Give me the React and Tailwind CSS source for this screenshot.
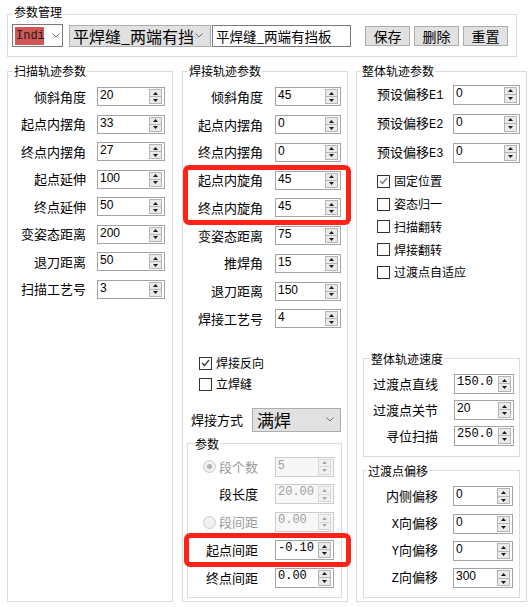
import React from 'react';

function Tri({ up, color }) {
  return (
    <svg width="5" height="3" viewBox="0 0 5 3" className="block">
      <path d={up ? 'M0 3h5L2.5 0z' : 'M0 0h5L2.5 3z'} fill={color} />
    </svg>
  );
}

function Chevron() {
  return (
    <svg width="8" height="5" viewBox="0 0 8 5" className="block">
      <path d="M0.5 0.5L4 4L7.5 0.5" fill="none" stroke="#707070" strokeWidth="1" />
    </svg>
  );
}

// Windows-style spin edit
function Spin({ value, w = 'w-[67px]', h = 'h-[19px]', disabled = false, mono = false }) {
  const box = disabled
    ? 'border-[#cccccc] bg-[#f7f7f7] text-[#a0a0a0]'
    : 'border-[#a3a3a3] bg-white text-black';
  const btn = disabled ? 'border-[#d8d8d8] bg-[#f2f2f2]' : 'border-[#b5b5b5] bg-[#eaeaea]';
  const arrow = disabled ? '#a8a8a8' : '#1a1a1a';
  return (
    <div className={`flex shrink-0 border ${w} ${h} ${box}`}>
      <span
        className={`flex-1 overflow-hidden whitespace-nowrap pl-[2px] text-[12px] leading-[15px] ${
          mono ? "font-['Liberation_Mono',monospace]" : "font-['Liberation_Sans',sans-serif]"
        }`}
      >
        {value}
      </span>
      <div className="my-[1px] mr-[2px] flex w-[13px] flex-col">
        <div className={`flex flex-1 items-center justify-center border ${btn}`}>
          <Tri up color={arrow} />
        </div>
        <div className={`-mt-px flex flex-1 items-center justify-center border ${btn}`}>
          <Tri color={arrow} />
        </div>
      </div>
    </div>
  );
}

function Check({ checked, label, dim }) {
  return (
    <div className="flex items-center gap-[4px]">
      <span className="flex h-[13px] w-[13px] items-center justify-center border border-[#333333] bg-white">
        {checked && (
          <svg width="9" height="8" viewBox="0 0 9 8">
            <path d="M1 4l2.5 2.5L8 1" fill="none" stroke={dim ? '#777777' : '#333333'} strokeWidth="1.2" />
          </svg>
        )}
      </span>
      <span className="text-[12px] leading-[16px]">{label}</span>
    </div>
  );
}

function Radio({ checked }) {
  return (
    <span className="flex h-[13px] w-[13px] shrink-0 items-center justify-center rounded-full border border-[#cccccc] bg-[#f0f0f0]">
      {checked && <span className="h-[5px] w-[5px] rounded-full bg-[#b0b0b0]" />}
    </span>
  );
}

function Mono({ children }) {
  return <span className="font-['Liberation_Mono',monospace] text-[12px]">{children}</span>;
}

const scanRows = [
  ['倾斜角度', '20'],
  ['起点内摆角', '33'],
  ['终点内摆角', '27'],
  ['起点延伸', '100'],
  ['终点延伸', '50'],
  ['变姿态距离', '200'],
  ['退刀距离', '50'],
  ['扫描工艺号', '3'],
];

const weldRows = [
  ['倾斜角度', '45'],
  ['起点内摆角', '0'],
  ['终点内摆角', '0'],
  ['起点内旋角', '45'],
  ['终点内旋角', '45'],
  ['变姿态距离', '75'],
  ['推焊角', '15'],
  ['退刀距离', '150'],
  ['焊接工艺号', '4'],
];

export default function App() {
  return (
    <div className="relative h-[607px] w-[532px] overflow-hidden bg-white pt-[4px] font-['Noto_Sans_CJK_SC',sans-serif] text-black">
      {/* 参数管理 */}
      <fieldset className="ml-[7px] w-[510px] border border-[#dcdcdc] pb-[9px]">
        <legend className="ml-[5px] px-[1px] pb-[4px] text-[12px] leading-[16px]">参数管理</legend>
        <div className="flex h-[23px] items-center pl-[4px]">
          <div className="flex h-[23px] w-[51px] items-center border border-[#7a7a7a] bg-white pl-[2px]">
            <span className="h-[18px] w-[29px] bg-[#d25858] pl-[1px] font-['Liberation_Mono',monospace] text-[12px] leading-[18px] text-[#1a1a1a]">
              Indi
            </span>
            <span className="ml-[8px]">
              <Chevron />
            </span>
          </div>
          <div className="ml-[6px] flex h-[22px] w-[142px] items-center border border-[#adadad] bg-[#e1e1e1] pl-[3px]">
            <span className="w-[121px] overflow-hidden whitespace-nowrap text-[16px] leading-[20px]">平焊缝_两端有挡板</span>
            <span className="ml-[1px]">
              <Chevron />
            </span>
          </div>
          <div className="ml-[1px] flex h-[22px] w-[139px] items-center overflow-hidden whitespace-nowrap border border-[#7a7a7a] bg-white pl-[3px] text-[13.5px] leading-[20px]">
            平焊缝_两端有挡板
          </div>
          <div className="ml-[14px] flex gap-[4px]">
            {['保存', '删除', '重置'].map((t) => (
              <button
                key={t}
                type="button"
                className="flex h-[20px] w-[45px] items-center justify-center border border-[#adadad] bg-[#e1e1e1] text-[14px] leading-[18px]"
              >
                {t}
              </button>
            ))}
          </div>
        </div>
      </fieldset>

      <div className="mt-[6px] flex">
        {/* 扫描轨迹参数 */}
        <fieldset className="ml-[7px] h-[539px] w-[166px] border border-[#dcdcdc]">
          <legend className="ml-[5px] px-[1px] text-[12px] leading-[16px]">扫描轨迹参数</legend>
          <div className="flex flex-col pt-[4px]">
            {scanRows.map(([label, v]) => (
              <div key={label} className="flex h-[27.5px] items-center">
                <span className="w-[78px] text-right text-[13px] leading-[18px]">{label}</span>
                <span className="ml-[11px]">
                  <Spin value={v} w="w-[68px]" />
                </span>
              </div>
            ))}
          </div>
        </fieldset>

        {/* 焊接轨迹参数 */}
        <fieldset className="ml-[9px] h-[539px] w-[166px] border border-[#dcdcdc]">
          <legend className="ml-[5px] px-[1px] text-[12px] leading-[16px]">焊接轨迹参数</legend>
          <div className="flex flex-col pt-[4px]">
            {weldRows.map(([label, v]) => (
              <div key={label} className="flex h-[27.75px] items-center">
                <span className="w-[80px] text-right text-[13px] leading-[18px]">{label}</span>
                <span className="ml-[12px]">
                  <Spin value={v} w="w-[66px]" />
                </span>
              </div>
            ))}
          </div>
          <div className="mt-[20px] flex flex-col pl-[16px]">
            <div className="flex h-[21px] items-center">
              <Check checked label="焊接反向" />
            </div>
            <div className="flex h-[21px] items-center">
              <Check label="立焊缝" />
            </div>
          </div>
          <div className="mt-[13px] flex h-[24px] items-center pl-[8px]">
            <span className="w-[52px] text-[13px] leading-[18px]">焊接方式</span>
            <div className="ml-[9px] flex h-[24px] w-[89px] items-center justify-between border border-[#adadad] bg-[#e1e1e1] pl-[4px] pr-[6px]">
              <span className="text-[17px] leading-[22px]">满焊</span>
              <Chevron />
            </div>
          </div>

          {/* 参数 */}
          <fieldset className="ml-[4px] mt-[4px] w-[155px] border border-[#dcdcdc] pb-[5px]">
            <legend className="ml-[6px] px-[1px] text-[12px] leading-[16px]">参数</legend>
            <div className="flex flex-col pt-[1px]">
              <div className="flex h-[27.75px] items-center">
                <div className="flex w-[70px] items-center justify-end gap-[3px]">
                  <Radio checked />
                  <span className="text-[13px] leading-[18px] text-[#9a9a9a]">段个数</span>
                </div>
                <span className="ml-[17px]">
                  <Spin value="5" w="w-[59px]" h="h-[20px]" disabled />
                </span>
              </div>
              <div className="flex h-[27.75px] items-center">
                <span className="w-[70px] text-right text-[13px] leading-[18px]">段长度</span>
                <span className="ml-[17px]">
                  <Spin value="20.00" w="w-[59px]" h="h-[20px]" disabled mono />
                </span>
              </div>
              <div className="flex h-[27.75px] items-center">
                <div className="flex w-[70px] items-center justify-end gap-[3px]">
                  <Radio />
                  <span className="text-[13px] leading-[18px] text-[#9a9a9a]">段间距</span>
                </div>
                <span className="ml-[17px]">
                  <Spin value="0.00" w="w-[59px]" h="h-[20px]" disabled mono />
                </span>
              </div>
              <div className="flex h-[27.75px] items-center">
                <span className="w-[70px] text-right text-[13px] leading-[18px]">起点间距</span>
                <span className="ml-[17px]">
                  <Spin value="-0.10" w="w-[59px]" h="h-[20px]" mono />
                </span>
              </div>
              <div className="flex h-[27.75px] items-center">
                <span className="w-[70px] text-right text-[13px] leading-[18px]">终点间距</span>
                <span className="ml-[17px]">
                  <Spin value="0.00" w="w-[59px]" h="h-[20px]" mono />
                </span>
              </div>
            </div>
          </fieldset>
        </fieldset>

        {/* 整体轨迹参数 */}
        <fieldset className="ml-[8px] h-[539px] w-[171px] border border-[#dcdcdc]">
          <legend className="ml-[4px] px-[1px] text-[12px] leading-[16px]">整体轨迹参数</legend>
          <div className="flex flex-col pl-[20px] pt-[1px]">
            {['E1', 'E2', 'E3'].map((e) => (
              <div key={e} className="flex h-[29px] items-center">
                <span className="w-[76px] text-[13px] leading-[18px]">
                  预设偏移<Mono>{e}</Mono>
                </span>
                <Spin value="0" w="w-[67px]" h="h-[20px]" />
              </div>
            ))}
          </div>
          <div className="mt-[3px] flex flex-col pl-[20px]">
            {[
              ['固定位置', true],
              ['姿态归一', false],
              ['扫描翻转', false],
              ['焊接翻转', false],
              ['过渡点自适应', false],
            ].map(([t, c]) => (
              <div key={t} className="flex h-[22.75px] items-center">
                <Check label={t} checked={c} dim />
              </div>
            ))}
          </div>

          {/* 整体轨迹速度 */}
          <fieldset className="ml-[6px] mt-[67px] w-[157px] border border-[#dcdcdc] pb-[7px]">
            <legend className="ml-[6px] px-[1px] text-[12px] leading-[16px]">整体轨迹速度</legend>
            <div className="flex flex-col pt-[4px]">
              {[
                ['过渡点直线', '150.0', true],
                ['过渡点关节', '20', false],
                ['寻位扫描', '250.0', true],
              ].map(([t, v, m]) => (
                <div key={t} className="flex h-[26px] items-center">
                  <span className="w-[74px] text-right text-[13px] leading-[18px]">{t}</span>
                  <span className="ml-[16px]">
                    <Spin value={v} w="w-[60px]" h="h-[20px]" mono={m} />
                  </span>
                </div>
              ))}
            </div>
          </fieldset>

          {/* 过渡点偏移 */}
          <fieldset className="ml-[6px] mt-[6px] w-[157px] border border-[#dcdcdc] pb-[5px]">
            <legend className="ml-[3px] px-[1px] text-[12px] leading-[16px]">过渡点偏移</legend>
            <div className="flex flex-col pt-[4px]">
              {[
                [null, '内侧偏移', '0'],
                ['X', '向偏移', '0'],
                ['Y', '向偏移', '0'],
                ['Z', '向偏移', '300'],
              ].map(([p, t, v]) => (
                <div key={t + p} className="flex h-[27.33px] items-center">
                  <span className="w-[74px] text-right text-[13px] leading-[18px]">
                    {p && <Mono>{p}</Mono>}
                    {t}
                  </span>
                  <span className="ml-[15px]">
                    <Spin value={v} w="w-[60px]" h="h-[20px]" />
                  </span>
                </div>
              ))}
            </div>
          </fieldset>
        </fieldset>
      </div>

      {/* red annotation boxes */}
      <div className="pointer-events-none absolute left-[183px] top-[165px] h-[60px] w-[168px] rounded-[6px] border-[5px] border-[#ff2218]" />
      <div className="pointer-events-none absolute left-[184px] top-[533px] h-[34px] w-[167px] rounded-[6px] border-[5px] border-[#ff2218]" />
    </div>
  );
}
